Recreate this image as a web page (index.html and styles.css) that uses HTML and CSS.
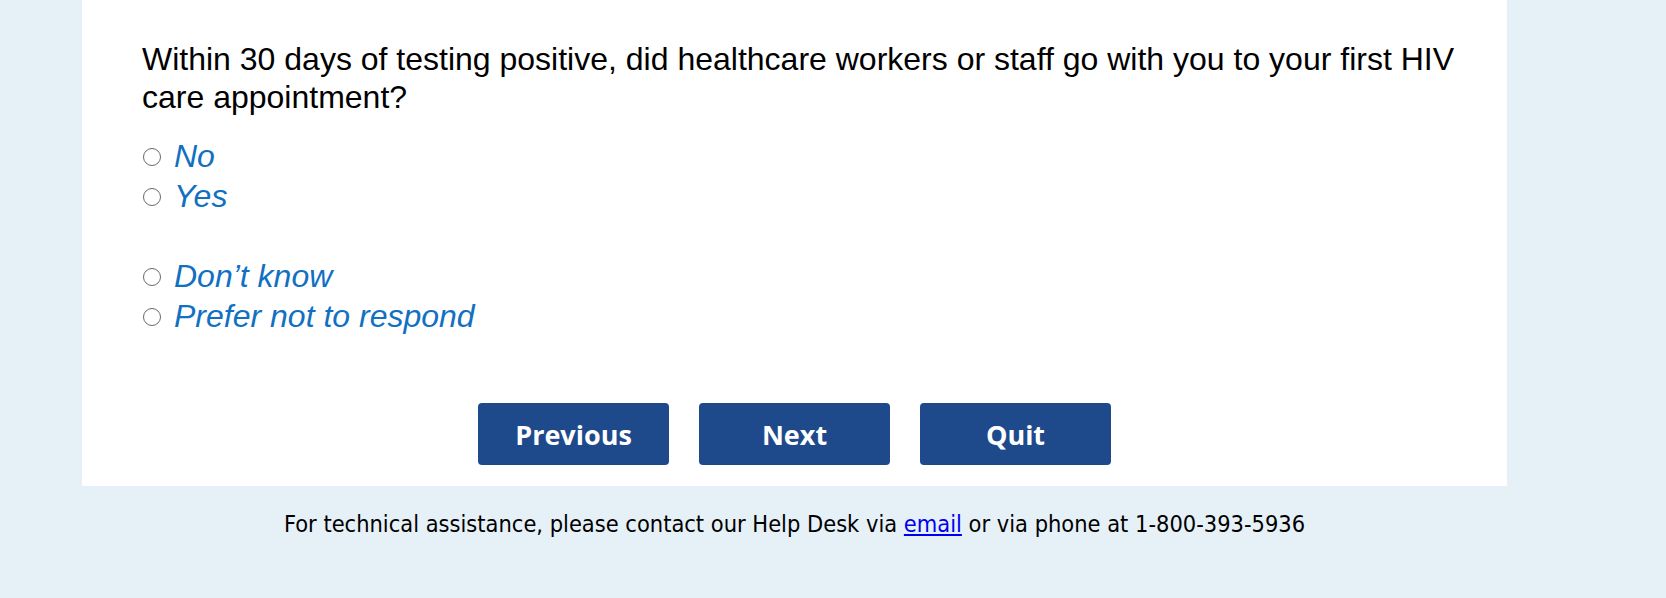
FILE: index.html
```html
<!DOCTYPE html>
<html lang="en">
<head>
<meta charset="utf-8">
<title>Survey question</title>
<link rel="stylesheet" href="styles.css">
</head>
<body>
<div class="page">
  <main class="panel">
    <p class="question">Within 30 days of testing positive, did healthcare workers or staff go with you to your first HIV care appointment?</p>
    <div class="options">
      <label class="option"><span class="radio"></span><span class="label">No</span></label>
      <label class="option"><span class="radio"></span><span class="label">Yes</span></label>
      <div class="spacer"></div>
      <label class="option"><span class="radio"></span><span class="label">Don’t know</span></label>
      <label class="option"><span class="radio"></span><span class="label">Prefer not to respond</span></label>
    </div>
    <div class="buttons">
      <button class="btn">Previous</button>
      <button class="btn">Next</button>
      <button class="btn">Quit</button>
    </div>
  </main>
  <footer class="footer">For technical assistance, please contact our Help Desk via <a href="#">email</a> or via phone at 1-800-393-5936</footer>
</div>
</body>
</html>
```

FILE: styles.css
```css
html, body {
  margin: 0;
  padding: 0;
  background: #e6f1f7;
}
.page {
  width: 1425px;
  margin-left: 82px;
}
.panel {
  background: #ffffff;
  padding: 40px 40px 21px 60px;
  font-family: "Liberation Sans", Arial, sans-serif;
}
.question {
  margin: 0;
  font-size: 32px;
  line-height: 38px;
  color: #000;
}
.options {
  margin-top: 20px;
  display: flex;
  flex-direction: column;
}
.option {
  display: flex;
  align-items: center;
  height: 40px;
  font-size: 32px;
  font-style: italic;
  color: #1170c2;
}
.spacer {
  height: 40px;
}
.radio {
  width: 18px;
  height: 18px;
  box-sizing: border-box;
  border: 1.6px solid #6a6a6a;
  border-radius: 50%;
  margin-left: 1px;
  margin-right: 13px;
  margin-top: 1px;
  flex: none;
}
.buttons {
  margin-top: 67px;
  margin-right: 20px;
  display: flex;
  justify-content: center;
  gap: 30px;
}
.btn {
  width: 191px;
  height: 62px;
  border: none;
  border-radius: 4px;
  background: #1e4a8c;
  color: #ffffff;
  font-family: "Open Sans", sans-serif;
  font-weight: 700;
  font-size: 27px;
  padding: 0;
}
.footer {
  text-align: center;
  padding-top: 24px;
  font-family: "DejaVu Sans Condensed", "DejaVu Sans", sans-serif;
  font-size: 23.4px;
  color: #000;
}
.footer a {
  color: #0000ee;
  text-decoration: underline;
}
```
